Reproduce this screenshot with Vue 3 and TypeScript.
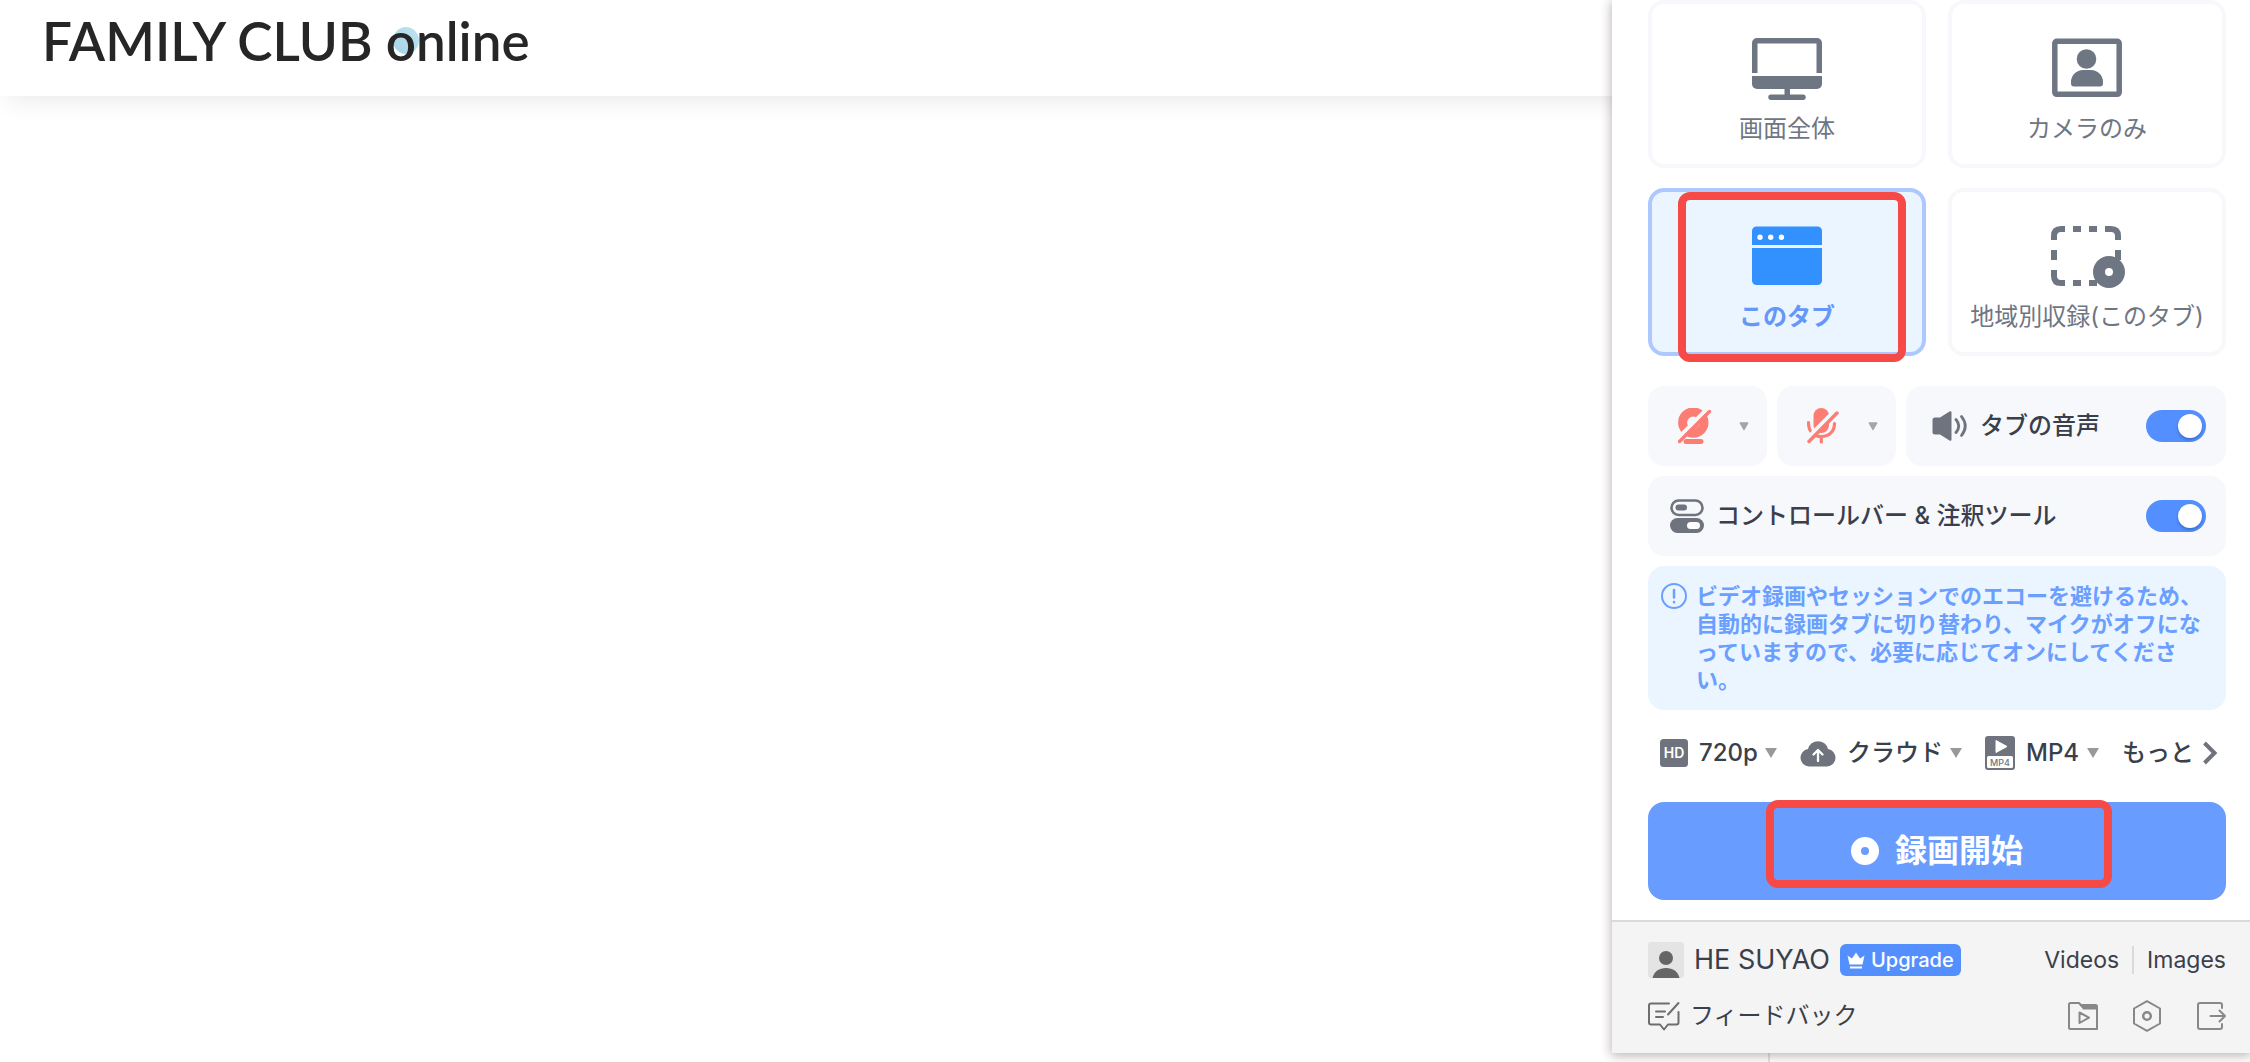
<script setup lang="ts">
import { ref } from 'vue'

type Source = 'screen' | 'camera' | 'tab' | 'region'

const sources: { id: Source; label: string }[] = [
  { id: 'screen', label: '画面全体' },
  { id: 'camera', label: 'カメラのみ' },
  { id: 'tab', label: 'このタブ' },
  { id: 'region', label: '地域別収録(このタブ)' },
]

const source = ref<Source>('tab')
const tabAudio = ref(true)
const toolbar = ref(true)
const quality = ref('720p')
const storage = ref('クラウド')
const format = ref('MP4')
</script>

<template>
  <div class="page">
    <header class="site-header">
      <a class="logo" href="#">FAMILY CLUB <span class="logo-o">o</span>nline</a>
    </header>
    <main class="site-body">
      <section class="stage"></section>
      <aside class="side"></aside>
    </main>

    <div class="panel">
      <div class="panel-body">
        <div class="sources" role="radiogroup" aria-label="録画ソース">
          <label v-for="s in sources" :key="s.id" class="card" :class="{ active: source === s.id }">
            <input v-model="source" class="hidden-input" type="radio" name="source" :value="s.id" />
            <svg v-if="s.id === 'screen'" class="card-icon" viewBox="0 0 70 62" fill="currentColor">
              <path d="M5 0H65a5 5 0 0 1 5 5V35H64.500V5.500H5.500V35H0V5a5 5 0 0 1 5-5z" />
              <path d="M0 38H70V46a5 5 0 0 1-5 5H38V56.500H51a2.700 2.700 0 0 1 0 5.500H19a2.700 2.700 0 0 1 0-5.500H32.500V51H5a5 5 0 0 1-5-5z" />
            </svg>
            <svg v-else-if="s.id === 'camera'" class="card-icon" viewBox="0 0 70 62">
              <rect x="2.8" y="3.300" width="64.400" height="53" rx="2" fill="none" stroke="currentColor" stroke-width="5.500" />
              <circle cx="34.500" cy="21" r="9.800" fill="currentColor" />
              <path d="M19 45.500V44a12 12 0 0 1 12-12h8a12 12 0 0 1 12 12v1.500a3 3 0 0 1-3 3H22a3 3 0 0 1-3-3z" fill="currentColor" />
            </svg>
            <svg v-else-if="s.id === 'tab'" class="card-icon window" viewBox="0 0 70 62">
              <path d="M4.500 0.500H65.500a4.500 4.500 0 0 1 4.500 4.500V19H0V5A4.500 4.500 0 0 1 4.500 0.500zM0 22H70V54.500a4.500 4.500 0 0 1-4.500 4.500H4.500A4.500 4.500 0 0 1 0 54.500z" fill="#3291ff" />
              <g fill="#fff"><circle cx="8" cy="11.200" r="2.700" /><circle cx="18.700" cy="11.200" r="2.700" /><circle cx="29.400" cy="11.200" r="2.700" /></g>
            </svg>
            <svg v-else class="card-icon" viewBox="0 0 70 62">
              <path d="M2 14V10Q2 3 9 3H13M21 3H29M37 3H45M53 3H59Q66 3 66 10V14M2 24V34M66 24V34M2 44V50Q2 57 9 57H13M21 57H29M37 57H45" fill="none" stroke="currentColor" stroke-width="6" />
              <circle cx="57" cy="46" r="10" fill="none" stroke="currentColor" stroke-width="12" />
            </svg>
            <span class="card-label">{{ s.label }}</span>
            <span v-if="s.id === 'tab'" class="mark mark-tab"></span>
          </label>
        </div>

        <div class="row devices">
          <div class="tile device">
            <button type="button" class="plain" aria-label="カメラ">
              <svg width="34" height="36" viewBox="0 0 34 36" fill="none">
                <circle cx="15.300" cy="14.600" r="10.700" stroke="#fb7d74" stroke-width="9" />
                <path d="M19.500 14.500A4.500 4.500 0 0 1 15 19.500" stroke="#fb7d74" stroke-width="3" />
                <path d="M29 1L-2 32" stroke="#f7f8fc" stroke-width="4" />
                <path d="M8 33.500H23" stroke="#fb7d74" stroke-width="5" stroke-linecap="round" />
                <path d="M31.500 3.500L1.500 33.500" stroke="#fb7d74" stroke-width="3.400" stroke-linecap="round" />
              </svg>
            </button>
            <button type="button" class="plain" aria-label="カメラを選択">
              <svg width="10" height="9" viewBox="0 0 10 9"><path d="M1.300 1H8.700L5 7.500z" fill="#a3a5a9" stroke="#a3a5a9" stroke-width="1.500" stroke-linejoin="round" /></svg>
            </button>
          </div>
          <div class="tile device">
            <button type="button" class="plain" aria-label="マイク">
              <svg width="34" height="36" viewBox="0 0 34 36" fill="none">
                <rect x="6.500" y="0" width="15.500" height="25" rx="7.700" fill="#fb7d74" />
                <path d="M1.500 14.500C1.500 24 7 28.500 14.300 28.500S27.500 24 27.500 15.500M14.300 28.500V34" stroke="#fb7d74" stroke-width="3.200" stroke-linecap="round" />
                <path d="M28.500 2L-1.500 32" stroke="#f7f8fc" stroke-width="4" />
                <path d="M30 5L2 33.500" stroke="#fb7d74" stroke-width="3.400" stroke-linecap="round" />
              </svg>
            </button>
            <button type="button" class="plain" aria-label="マイクを選択">
              <svg width="10" height="9" viewBox="0 0 10 9"><path d="M1.300 1H8.700L5 7.500z" fill="#a3a5a9" stroke="#a3a5a9" stroke-width="1.500" stroke-linejoin="round" /></svg>
            </button>
          </div>
          <label class="tile option audio">
            <svg width="36" height="30" viewBox="0 0 36 30">
              <path d="M3 6.500H8L17.500 0.500Q19.500 -.5 19.500 1.500V28.500Q19.500 30.500 17.500 29.500L8 23.500H3Q0.500 23.500 0.500 21V9Q0.500 6.500 3 6.500z" fill="#6f737e" />
              <path d="M24 8.500Q29.500 15 24 21.500M29.500 5.500Q37 15 29.500 24.500" fill="none" stroke="#6f737e" stroke-width="2.800" stroke-linecap="round" />
            </svg>
            <span>タブの音声</span>
            <input v-model="tabAudio" class="switch" type="checkbox" />
          </label>
        </div>

        <label class="tile option toolbar">
          <svg width="34" height="34" viewBox="0 0 34 34">
            <rect x="1.500" y="1.500" width="31" height="14.500" rx="7.200" fill="none" stroke="#6f737e" stroke-width="2.600" />
            <rect x="5.500" y="5.500" width="11.500" height="6" rx="3" fill="#6f737e" />
            <rect x="0" y="19" width="34" height="15" rx="7.500" fill="#6f737e" />
            <rect x="17" y="23" width="13" height="7" rx="3.500" fill="#fff" />
          </svg>
          <span>コントロールバー &amp; 注釈ツール</span>
          <input v-model="toolbar" class="switch" type="checkbox" />
        </label>

        <div class="notice">
          <svg width="28" height="28" viewBox="0 0 28 28" fill="none" stroke="#6b9fff" stroke-linecap="round">
            <circle cx="14" cy="14" r="12" stroke-width="2" />
            <path d="M14 8V15.500M14 20V20.200" stroke-width="2.500" />
          </svg>
          <p>ビデオ録画やセッションでのエコーを避けるため、自動的に録画タブに切り替わり、マイクがオフになっていますので、必要に応じてオンにしてください。</p>
        </div>

        <div class="formats">
          <label class="format">
            <svg width="28" height="28" viewBox="0 0 28 28">
              <rect width="28" height="28" rx="3.500" fill="#6f737e" />
              <text x="14" y="19" text-anchor="middle" class="hd-text">HD</text>
            </svg>
            <select v-model="quality" aria-label="画質"><option>720p</option></select>
            <svg class="arrow" width="12" height="10" viewBox="0 0 12 10"><path d="M0 0H12L6 10z" fill="#999" /></svg>
          </label>
          <label class="format">
            <svg width="36" height="27" viewBox="0 0 36 27">
              <path d="M9 26.500a8.800 8.800 0 0 1-1-17.500A10.300 10.300 0 0 1 28 9a8.800 8.800 0 0 1-1 17.500z" fill="#6f737e" />
              <path d="M18 21V10.500M13.500 14.500L18 10L22.500 14.500" fill="none" stroke="#fff" stroke-width="2.300" stroke-linecap="round" stroke-linejoin="round" />
            </svg>
            <select v-model="storage" aria-label="保存先"><option>クラウド</option></select>
            <svg class="arrow" width="12" height="10" viewBox="0 0 12 10"><path d="M0 0H12L6 10z" fill="#999" /></svg>
          </label>
          <label class="format">
            <svg width="30" height="34" viewBox="0 0 30 34">
              <rect width="30" height="34" rx="3" fill="#6f737e" />
              <path d="M11 4.500L22 10.500L11 16.500z" fill="#fff" stroke="#fff" stroke-linejoin="round" />
              <rect x="2" y="20" width="26" height="12" rx="1.500" fill="#fff" />
              <text x="15" y="29.500" text-anchor="middle" class="mp4-text">MP4</text>
            </svg>
            <select v-model="format" aria-label="形式"><option>MP4</option></select>
            <svg class="arrow" width="12" height="10" viewBox="0 0 12 10"><path d="M0 0H12L6 10z" fill="#999" /></svg>
          </label>
          <button type="button" class="more">
            もっと
            <svg width="16" height="24" viewBox="0 0 16 24"><path d="M2.500 2L12.500 12L2.500 22" fill="none" stroke="#6f737e" stroke-width="4" /></svg>
          </button>
        </div>

        <button type="button" class="record">
          <svg width="28" height="28" viewBox="0 0 28 28"><circle cx="14" cy="14" r="9" fill="none" stroke="#fff" stroke-width="10" /></svg>
          録画開始
          <span class="mark mark-record"></span>
        </button>
      </div>

      <footer class="panel-footer">
        <div class="account">
          <svg width="36" height="36" viewBox="0 0 36 36">
            <rect width="36" height="36" rx="3" fill="#e4e4e4" />
            <circle cx="18" cy="16" r="7" fill="#666" />
            <path d="M4.500 36C6 29.500 11 26 18 26S30 29.500 31.500 36z" fill="#666" />
          </svg>
          <span class="name">HE SUYAO</span>
          <button type="button" class="upgrade">
            <svg width="18" height="17" viewBox="0 0 18 17" fill="#fff">
              <path d="M0.500 3.500L5 6.500L9 0.500L13 6.500L17.500 3.500L15.500 12.500H2.500z" />
              <rect x="3" y="14.500" width="12" height="2" />
            </svg>
            Upgrade
          </button>
          <nav class="links">
            <a href="#">Videos</a>
            <a href="#">Images</a>
          </nav>
        </div>
        <div class="tools">
          <a class="feedback" href="#">
            <svg width="34" height="32" viewBox="0 0 34 32" fill="none" stroke="#6e6e6e" stroke-width="2" stroke-linecap="round" stroke-linejoin="round">
              <path d="M21 3.500H3Q1 3.500 1 5.500V22.500Q1 24.500 3 24.500H12L16 29.500L20 24.500H28.500Q30.500 24.500 30.500 22.500V12" />
              <path d="M30.500 3L20 14.500M8 11.500H17M8 17H15" />
            </svg>
            フィードバック
          </a>
          <div class="tool-icons">
            <button type="button" class="plain" aria-label="保存フォルダ">
              <svg width="30" height="32" viewBox="0 0 30 32" fill="none" stroke="#888" stroke-width="2" stroke-linejoin="round">
                <path d="M1 4.500Q1 3 2.500 3H11L14.500 7H29V29H2.500Q1 29 1 27.500zM13 5H27.500Q29 5 29 6.500V7M14.500 8.500H29" />
                <path d="M11.500 12.500L21 17.700L11.500 23z" />
              </svg>
            </button>
            <button type="button" class="plain" aria-label="設定">
              <svg width="30" height="32" viewBox="0 0 30 32" fill="none" stroke="#888" stroke-width="2" stroke-linejoin="round">
                <path d="M15 1.200L28 8.500V23.500L15 30.800L2 23.500V8.500z" />
                <circle cx="15" cy="16" r="3.800" stroke-width="2.500" />
              </svg>
            </button>
            <button type="button" class="plain" aria-label="ログアウト">
              <svg width="30" height="32" viewBox="0 0 30 32" fill="none" stroke="#888" stroke-width="2" stroke-linecap="round" stroke-linejoin="round">
                <path d="M26 8V5Q26 3 24 3H4Q2 3 2 5V27Q2 29 4 29H24Q26 29 26 27V24" />
                <path d="M14.500 16H28M23.500 10.500L29 16L23.500 21.500" />
              </svg>
            </button>
          </div>
        </div>
      </footer>
    </div>
  </div>
</template>

<style>
body {
  margin: 0;
  background: #fff;
}
</style>

<style scoped>
* {
  box-sizing: border-box;
}

.page {
  position: relative;
  display: flex;
  flex-direction: column;
  min-height: 100vh;
  overflow: hidden;
  font-family: Inter, 'Noto Sans CJK JP', sans-serif;
  font-size: 24px;
  line-height: 32px;
  color: #3a3f4c;
}

a {
  color: inherit;
  text-decoration: none;
}

button,
select {
  padding: 0;
  border: 0;
  background: none;
  color: inherit;
  font: inherit;
  cursor: pointer;
}

svg {
  display: block;
  flex: none;
}

.plain {
  display: flex;
}

.site-header {
  position: relative;
  z-index: 1;
  display: flex;
  padding: 11px 42px 25px;
  background: #fff;
  box-shadow: 0 12px 24px -8px rgba(0, 0, 0, 0.09);
}

.logo {
  position: relative;
  z-index: 0;
  font-family: Lato, sans-serif;
  font-size: 53px;
  line-height: 60px;
  font-weight: 600;
  color: #262626;
}

.logo-o {
  position: relative;
}

.logo-o::before {
  content: '';
  position: absolute;
  z-index: -1;
  right: -3px;
  bottom: 18px;
  width: 26px;
  height: 27px;
  border-radius: 50%;
  background: linear-gradient(45deg, #a4d4e6, #c0e3ef);
}

.site-body {
  display: flex;
  flex: 1;
}

.stage {
  flex: 1;
}

.side {
  width: 482px;
  border-left: 2px solid #e4e4e4;
}

.panel {
  position: absolute;
  z-index: 2;
  top: 0;
  right: 0;
  width: 638px;
  max-width: 100%;
  background: #fff;
  box-shadow: 0 2px 10px 1px rgba(60, 30, 30, 0.32);
}

.panel-body {
  padding: 0 24px 20px 36px;
}

.sources {
  display: grid;
  grid-template-columns: 1fr 1fr;
  gap: 20px 22px;
}

.card {
  position: relative;
  display: flex;
  flex-direction: column;
  align-items: center;
  gap: 13px;
  padding: 34px 0 19px;
  border: 4px solid #f6f8fc;
  border-radius: 16px;
  color: #6f7683;
  cursor: pointer;
}

.card.active {
  border-color: #adc8ff;
  background: #ebf5ff;
  color: #6596fa;
  font-weight: 700;
}

.card-icon {
  width: 70px;
  height: 62px;
  overflow: visible;
}

.card-label {
  white-space: nowrap;
}

.hidden-input {
  position: absolute;
  opacity: 0;
}

.mark {
  position: absolute;
  border: 8px solid #f54a45;
  border-radius: 12px;
}

.mark-tab {
  inset: 0 16px -10px 26px;
}

.row {
  display: flex;
  gap: 10px;
  margin: 30px 0 10px;
}

.tile {
  display: flex;
  align-items: center;
  height: 80px;
  border-radius: 16px;
  background: #f7f8fc;
}

.device {
  justify-content: space-between;
  width: 119px;
  padding: 0 18px 0 30px;
}

.option {
  gap: 12px;
  padding: 0 20px 0 22px;
  font-weight: 500;
  cursor: pointer;
}

.audio {
  flex: 1;
  padding-left: 26px;
}

.switch {
  position: relative;
  appearance: none;
  width: 60px;
  height: 32px;
  margin: 0 0 0 auto;
  border-radius: 16px;
  background: #c9ccd4;
  cursor: pointer;
}

.switch::before {
  content: '';
  position: absolute;
  top: 4px;
  left: 4px;
  width: 24px;
  height: 24px;
  border-radius: 50%;
  background: #fff;
  box-shadow: 0 2px 3px rgba(0, 35, 80, 0.3);
}

.switch:checked {
  background: #548fff;
}

.switch:checked::before {
  left: 32px;
}

.notice {
  display: flex;
  gap: 8px;
  margin-top: 10px;
  padding: 16px 16px 16px 12px;
  border-radius: 16px;
  background: #ebf5ff;
  color: #6b9fff;
  font-size: 22px;
  line-height: 28px;
  font-weight: 700;
}

.notice p {
  margin: 0;
}

.formats {
  display: flex;
  align-items: center;
  justify-content: space-between;
  height: 34px;
  margin: 26px 0 32px;
  padding: 0 8px 0 12px;
  font-weight: 500;
}

.format {
  display: flex;
  align-items: center;
}

.format select {
  appearance: none;
  margin: 0 7px 0 11px;
}

.more {
  display: flex;
  align-items: center;
  gap: 8px;
}

.hd-text {
  font-size: 14px;
  font-weight: 600;
  fill: #fff;
}

.mp4-text {
  font-size: 9px;
  font-weight: 500;
  fill: #6f737e;
}

.record {
  position: relative;
  display: flex;
  align-items: center;
  justify-content: center;
  gap: 16px;
  width: 100%;
  height: 98px;
  border-radius: 16px;
  background: #689dff;
  color: #fff;
  font-size: 32px;
  font-weight: 700;
}

.mark-record {
  inset: -2px 114px 12px 118px;
}

.panel-footer {
  padding: 20px 24px 21px 36px;
  border-top: 2px solid #dadada;
  background: #f4f4f4;
}

.account,
.tools,
.links,
.feedback,
.tool-icons {
  display: flex;
  align-items: center;
}

.name {
  margin: 0 10px;
  font-size: 27px;
}

.upgrade {
  display: flex;
  align-items: center;
  gap: 6px;
  padding: 0 7px;
  border-radius: 6px;
  background: #548fff;
  color: #fff;
  font-size: 20px;
  font-weight: 500;
}

.links {
  margin-left: auto;
  font-size: 23px;
}

.links a + a {
  margin-left: 13px;
  padding-left: 13px;
  border-left: 2px solid #dadada;
  line-height: 28px;
}

.tools {
  justify-content: space-between;
  margin-top: 22px;
}

.feedback {
  gap: 8px;
}

.tool-icons {
  gap: 34px;
}
</style>
